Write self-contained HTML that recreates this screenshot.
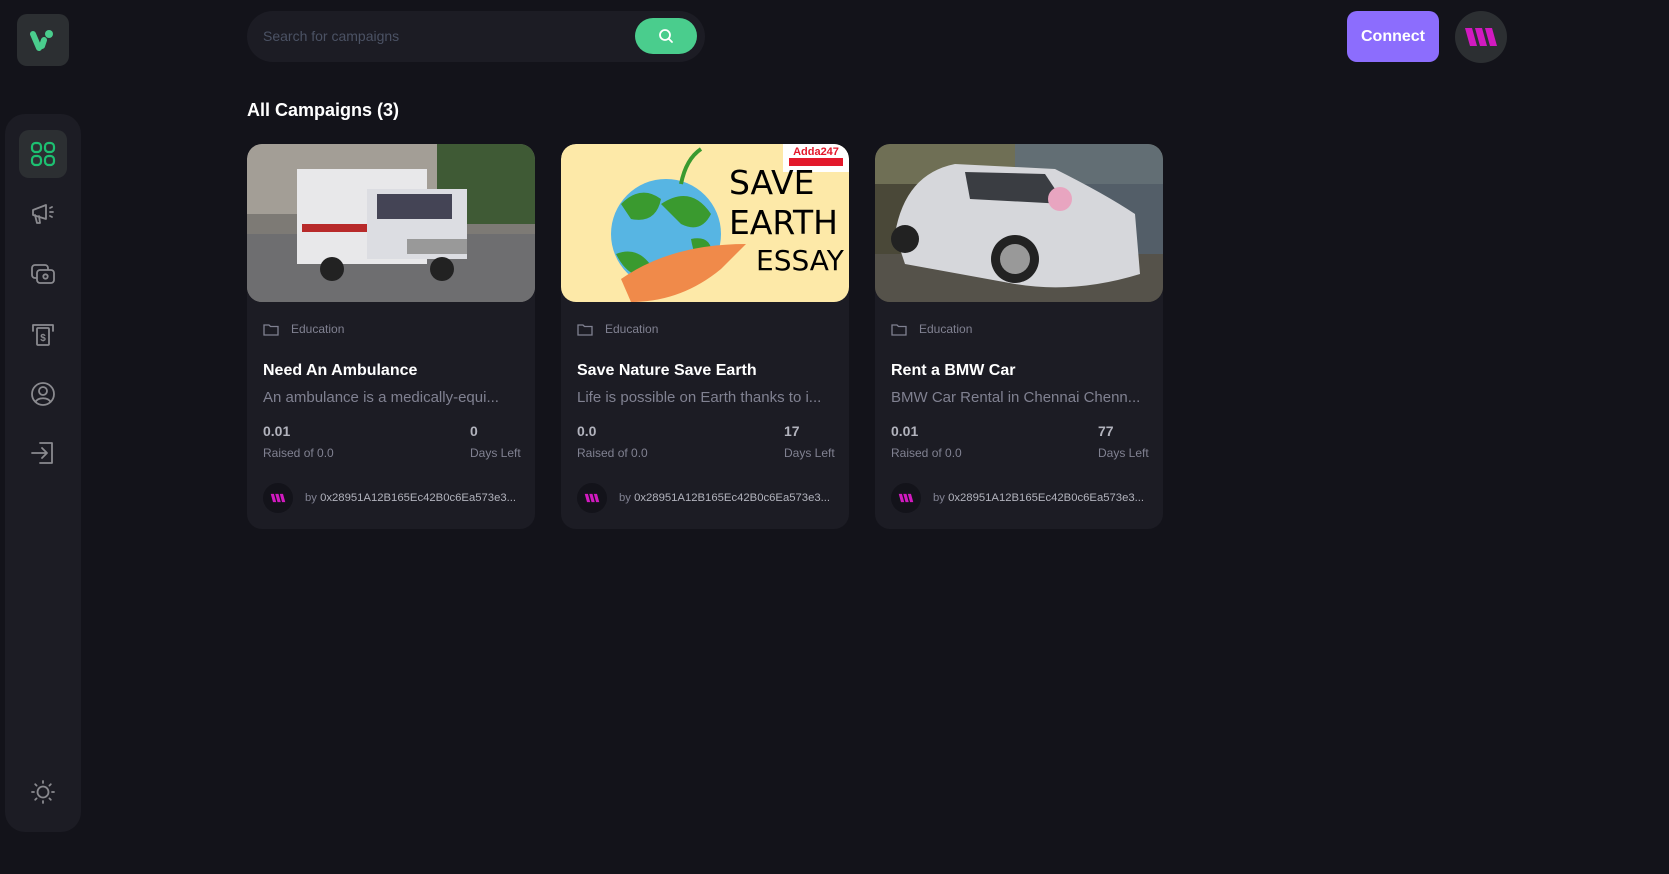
<!DOCTYPE html>
<html><head><meta charset="utf-8"><style>
*{box-sizing:border-box;margin:0;padding:0}
body{width:1669px;height:874px;background:#13131a;font-family:"Liberation Sans",sans-serif;position:relative;overflow:hidden;color:#fff}
.abs{position:absolute}
.logo{left:17px;top:14px;width:52px;height:52px;background:#2c2f32;border-radius:10px;display:flex;align-items:center;justify-content:center}
.side{left:5px;top:114px;width:76px;height:718px;background:#1c1c24;border-radius:20px}
.ic{position:absolute;left:14px;width:48px;height:48px;display:flex;align-items:center;justify-content:center}
.ic svg{width:28px;height:28px;fill:none;stroke:#8a8a8f;stroke-width:1.8;stroke-linecap:round;stroke-linejoin:round}
.search{left:247px;top:11px;width:458px;height:51px;background:#1c1c24;border-radius:26px}
.search span{position:absolute;left:16px;top:17px;font-size:14px;color:#4b5264}
.sbtn{position:absolute;left:388px;top:7px;width:62px;height:36px;background:#4acd8d;border-radius:18px;display:flex;align-items:center;justify-content:center}
.connect{left:1347px;top:11px;width:92px;height:51px;background:#8c6dfd;border-radius:10px;font-weight:bold;font-size:16px;display:flex;align-items:center;justify-content:center}
.av{left:1455px;top:11px;width:52px;height:52px;border-radius:50%;background:#2c2f32;display:flex;align-items:center;justify-content:center}
h1{position:absolute;left:247px;top:100px;font-size:18px;font-weight:bold}
.card{position:absolute;top:144px;width:288px;height:385px;background:#1c1c24;border-radius:15px;overflow:hidden}
.img{width:288px;height:158px;border-radius:15px;overflow:hidden;display:block}
.cat{position:absolute;left:16px;top:178px;font-size:12px;color:#808191;display:flex;align-items:center;gap:12px}
.t{position:absolute;left:16px;top:218px;font-size:16px;font-weight:bold}
.d{position:absolute;left:16px;top:245px;font-size:15px;color:#808191;white-space:nowrap}
.v{position:absolute;top:279px;font-size:14px;font-weight:bold;color:#b2b3bd}
.l{position:absolute;top:302px;font-size:12px;color:#808191}
.by{position:absolute;left:16px;top:339px;display:flex;align-items:center;gap:12px;font-size:11.3px;color:#808191;white-space:nowrap}
.by b{font-weight:normal;color:#b2b3bd}
.mini{width:30px;height:30px;border-radius:50%;background:#13131a;display:flex;align-items:center;justify-content:center}
</style></head><body>
<div class="abs logo"><svg width="26" height="24" viewBox="0 0 26 24"><path d="M3 6 L9 20" stroke="#4acd8d" stroke-width="6" stroke-linecap="round"/><path d="M12 18 L14 12" stroke="#4acd8d" stroke-width="6" stroke-linecap="round"/><circle cx="19" cy="6" r="4" fill="#4acd8d"/></svg></div>
<div class="abs side">
<div class="ic" style="top:16px;background:#2c2f32;border-radius:10px"><svg style="stroke:#1dc071;stroke-width:2.2" viewBox="0 0 28 28"><rect x="3" y="3" width="9" height="9" rx="3.5"/><rect x="16" y="3" width="9" height="9" rx="3.5"/><rect x="3" y="16" width="9" height="9" rx="3.5"/><rect x="16" y="16" width="9" height="9" rx="3.5"/></svg></div>
<div class="ic" style="top:75px"><svg viewBox="0 0 28 28"><path d="M4 11 L17 6 V20 L4 16 Z"/><path d="M6 16 L8 24 H11 L10 17"/><path d="M21 9 L23 8 M21 13 H24 M21 17 L23 18"/></svg></div>
<div class="ic" style="top:136px"><svg viewBox="0 0 28 28"><rect x="3" y="5" width="16" height="13" rx="3"/><rect x="8" y="10" width="17" height="13" rx="3" fill="#1c1c24"/><circle cx="16.5" cy="16.5" r="2.2"/></svg></div>
<div class="ic" style="top:196px"><svg viewBox="0 0 28 28"><path d="M4 11 V5 H24 V11"/><rect x="8" y="8" width="12" height="17" rx="1"/><text x="14" y="21" font-size="10" text-anchor="middle" fill="#8a8a8f" stroke="none" font-weight="bold" font-family="Liberation Sans">$</text></svg></div>
<div class="ic" style="top:256px"><svg viewBox="0 0 28 28"><circle cx="14" cy="14" r="11"/><circle cx="14" cy="11" r="4"/><path d="M6.5 22 C9 17 19 17 21.5 22"/></svg></div>
<div class="ic" style="top:315px"><svg viewBox="0 0 28 28"><path d="M11 4 H23 V24 H11"/><path d="M3 14 H17 M13 9 L18 14 L13 19"/></svg></div>
<div class="ic" style="top:654px"><svg viewBox="0 0 28 28"><circle cx="14" cy="14" r="5.5"/><path d="M14 3V5 M14 23V25 M3 14H5 M23 14H25 M6.2 6.2L7.6 7.6 M20.4 20.4L21.8 21.8 M6.2 21.8L7.6 20.4 M20.4 7.6L21.8 6.2"/></svg></div>
</div>
<div class="abs search"><span>Search for campaigns</span><div class="sbtn"><svg width="16" height="16" viewBox="0 0 16 16" fill="none" stroke="#fff" stroke-width="1.8"><circle cx="7" cy="7" r="5"/><path d="M11 11 L14 14" stroke-linecap="round"/></svg></div></div>
<div class="abs connect">Connect</div>
<div class="abs av"><svg width="34" height="22" viewBox="0 0 34 22"><path d="M1 2 H8 L13 20 H6Z M11 2 H18 L23 20 H16Z M21 2 H28 L33 20 H26Z" fill="#d21ac0"/></svg></div>
<h1>All Campaigns (3)</h1>

<div class="card" style="left:247px">
<svg class="img" viewBox="0 0 288 158"><rect width="288" height="158" fill="#7d7a75"/><rect width="200" height="70" fill="#a39e96"/><rect x="190" y="0" width="98" height="80" fill="#3f5a35"/><rect y="90" width="288" height="68" fill="#6e6e70"/><rect x="50" y="25" width="130" height="95" fill="#e8e8ea"/><rect x="55" y="80" width="120" height="8" fill="#b82a2a"/><rect x="120" y="45" width="100" height="70" fill="#dcdde2"/><rect x="130" y="50" width="75" height="25" fill="#445"/><circle cx="85" cy="125" r="12" fill="#222"/><circle cx="195" cy="125" r="12" fill="#222"/><rect x="160" y="95" width="60" height="15" fill="#999"/></svg>
<div class="cat"><svg width="16" height="13" viewBox="0 0 16 13" fill="none" stroke="#808191" stroke-width="1.3"><path d="M1 2 H6 L7.5 3.5 H15 V12 H1Z"/></svg>Education</div>
<div class="t">Need An Ambulance</div>
<div class="d">An ambulance is a medically-equi...</div>
<div class="v" style="left:16px;color:#b2b3bd">0.01</div><div class="v" style="left:223px">0</div>
<div class="l" style="left:16px">Raised of 0.0</div><div class="l" style="left:223px">Days Left</div>
<div class="by"><div class="mini"><svg width="16" height="10" viewBox="0 0 34 22"><path d="M1 2 H8 L13 20 H6Z M11 2 H18 L23 20 H16Z M21 2 H28 L33 20 H26Z" fill="#d21ac0"/></svg></div><span>by <b>0x28951A12B165Ec42B0c6Ea573e3...</b></span></div>
</div>

<div class="card" style="left:561px">
<svg class="img" viewBox="0 0 288 158"><rect width="288" height="158" fill="#fde9a8"/><circle cx="105" cy="90" r="55" fill="#57b5e3"/><path d="M60 60 Q80 40 100 55 Q95 80 70 75Z M100 60 Q130 40 150 70 Q140 90 120 80Z M55 110 Q80 100 95 130 Q70 140 55 110Z M130 95 Q155 90 150 120 Q135 125 130 95Z" fill="#3a9a2f"/><path d="M60 135 Q110 100 185 100 L160 125 Q120 158 70 158Z" fill="#f08a4a"/><path d="M120 40 Q125 15 140 5" stroke="#3a9a2f" stroke-width="4" fill="none"/><rect x="222" y="0" width="66" height="28" fill="#fff"/><rect x="228" y="14" width="54" height="8" fill="#e3182b"/><text x="255" y="11" font-size="11" fill="#e3182b" text-anchor="middle" font-family="Liberation Sans" font-weight="bold">Adda247</text><text x="168" y="50" font-size="33" font-family="DejaVu Sans">SAVE</text><text x="168" y="90" font-size="33" font-family="DejaVu Sans">EARTH</text><text x="195" y="126" font-size="28" font-family="DejaVu Sans">ESSAY</text></svg>
<div class="cat"><svg width="16" height="13" viewBox="0 0 16 13" fill="none" stroke="#808191" stroke-width="1.3"><path d="M1 2 H6 L7.5 3.5 H15 V12 H1Z"/></svg>Education</div>
<div class="t">Save Nature Save Earth</div>
<div class="d">Life is possible on Earth thanks to i...</div>
<div class="v" style="left:16px">0.0</div><div class="v" style="left:223px">17</div>
<div class="l" style="left:16px">Raised of 0.0</div><div class="l" style="left:223px">Days Left</div>
<div class="by"><div class="mini"><svg width="16" height="10" viewBox="0 0 34 22"><path d="M1 2 H8 L13 20 H6Z M11 2 H18 L23 20 H16Z M21 2 H28 L33 20 H26Z" fill="#d21ac0"/></svg></div><span>by <b>0x28951A12B165Ec42B0c6Ea573e3...</b></span></div>
</div>

<div class="card" style="left:875px">
<svg class="img" viewBox="0 0 288 158"><rect width="288" height="158" fill="#4a4838"/><rect width="288" height="40" fill="#6f6f55"/><rect x="140" y="0" width="148" height="110" fill="#5a6e88" opacity=".6"/><rect y="110" width="288" height="48" fill="#55524a"/><path d="M20 90 Q30 30 80 20 L180 25 Q230 50 260 70 L265 130 Q200 150 140 140 L30 120Z" fill="#d6d7db"/><path d="M90 28 L170 30 L190 60 L95 55Z" fill="#3a3d42"/><circle cx="140" cy="115" r="24" fill="#222"/><circle cx="140" cy="115" r="15" fill="#999"/><circle cx="30" cy="95" r="14" fill="#222"/><circle cx="185" cy="55" r="12" fill="#e8a5c0"/></svg>
<div class="cat"><svg width="16" height="13" viewBox="0 0 16 13" fill="none" stroke="#808191" stroke-width="1.3"><path d="M1 2 H6 L7.5 3.5 H15 V12 H1Z"/></svg>Education</div>
<div class="t">Rent a BMW Car</div>
<div class="d">BMW Car Rental in Chennai Chenn...</div>
<div class="v" style="left:16px">0.01</div><div class="v" style="left:223px">77</div>
<div class="l" style="left:16px">Raised of 0.0</div><div class="l" style="left:223px">Days Left</div>
<div class="by"><div class="mini"><svg width="16" height="10" viewBox="0 0 34 22"><path d="M1 2 H8 L13 20 H6Z M11 2 H18 L23 20 H16Z M21 2 H28 L33 20 H26Z" fill="#d21ac0"/></svg></div><span>by <b>0x28951A12B165Ec42B0c6Ea573e3...</b></span></div>
</div>
</body></html>
